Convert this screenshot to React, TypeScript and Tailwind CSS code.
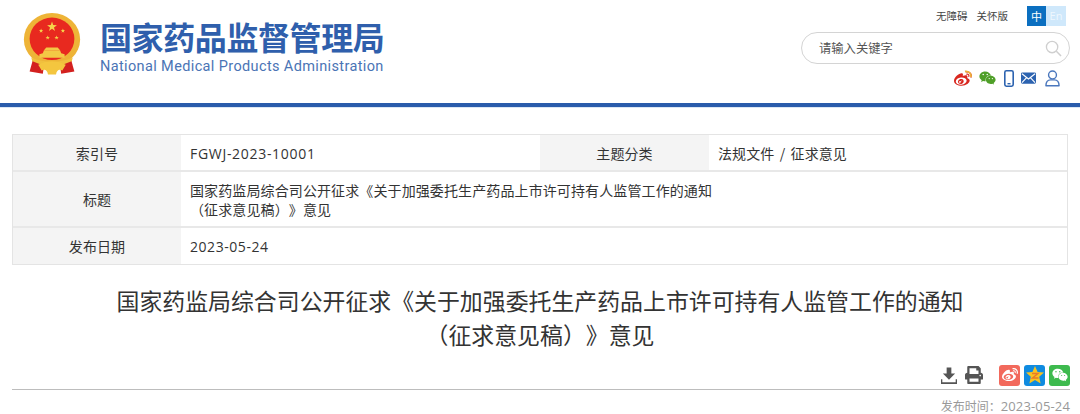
import React from "react";
import { FaWeibo, FaWeixin, FaPrint } from "react-icons/fa";

const CJK = "font-['Noto_Sans_CJK_SC','Open_Sans',sans-serif] [text-spacing-trim:space-all]";
const LATIN = "font-['Open_Sans','Noto_Sans_CJK_SC',sans-serif]";

function Emblem() {
  const stars = [
    [50, 24, 9],
    [31, 31, 4],
    [69, 31, 4],
    [42.5, 43, 4],
    [58, 43, 4],
  ];
  const starPath = (cx: number, cy: number, r: number) => {
    const p: string[] = [];
    for (let i = 0; i < 10; i++) {
      const a = -Math.PI / 2 + (i * Math.PI) / 5;
      const rr = i % 2 ? r * 0.4 : r;
      p.push(`${cx + rr * Math.cos(a)},${cy + rr * Math.sin(a)}`);
    }
    return p.join(" ");
  };
  return (
    <svg viewBox="0 0 100 108" className="w-[58px] h-[62px]">
      <ellipse cx="50" cy="46" rx="49" ry="46" fill="#eeb437" />
      <ellipse cx="50" cy="45" rx="39" ry="37" fill="#e8291f" />
      {stars.map(([x, y, r], i) => (
        <polygon key={i} points={starPath(x, y, r)} fill="#f6d44a" />
      ))}
      <path d="M28 78 L72 78 L72 72 L66 70 L64 65 L36 65 L34 70 L28 72 Z" fill="#f3c845" />
      <path d="M36 65 L64 65 L60 60 L40 60 Z" fill="#f3c845" />
      <path d="M14 78 Q50 92 86 78 L84 86 Q50 100 16 86 Z" fill="#f0c03e" />
      <path d="M16 84 L36 92 L34 106 L11 102 Z" fill="#d3201f" />
      <path d="M84 84 L64 92 L66 106 L89 102 Z" fill="#d3201f" />
      <path d="M26 90 Q50 78 74 90 L68 100 Q59 96 57 107 L43 107 Q41 96 32 100 Z" fill="#f4c63f" />
    </svg>
  );
}

function TopIcons() {
  return (
    <div className="flex items-center mt-[4px] h-[20px] mr-[10px]">
      <span className="relative block w-[18px] h-[18px] mr-[7px]">
        <FaWeibo className="text-[#d9271f] w-[18px] h-[18px] absolute top-[1px] left-0" />
        <svg viewBox="0 0 18 18" className="absolute inset-0 w-[18px] h-[18px]">
          <path d="M11 2.5 A5 5 0 0 1 17 8" fill="none" stroke="#edb13c" strokeWidth="1.8" />
        </svg>
      </span>
      <FaWeixin className="text-[#4f9f28] w-[17px] h-[16px] mr-[8px]" />
      <svg viewBox="0 0 10 17" className="w-[10px] h-[17px] mr-[7px]">
        <rect x="0.8" y="0.8" width="8.4" height="15.4" rx="1.6" fill="none" stroke="#2c63b0" strokeWidth="1.6" />
        <rect x="3.5" y="13" width="3" height="1.4" fill="#2c63b0" />
      </svg>
      <svg viewBox="0 0 16 12" className="w-[15px] h-[12px] mr-[9px]">
        <rect width="16" height="12" rx="1.5" fill="#2c63b0" />
        <path d="M1 1.5 L8 7 L15 1.5 M1 11 L6 5.5 M15 11 L10 5.5" fill="none" stroke="#fff" strokeWidth="1.2" />
      </svg>
      <svg viewBox="0 0 16 18" className="w-[15px] h-[17px]">
        <circle cx="8" cy="5.2" r="4.2" fill="none" stroke="#4a77bd" strokeWidth="1.5" />
        <path d="M1 16.8 Q1 10.5 6 10.5 L10 10.5 Q15 10.5 15 16.8 Z" fill="none" stroke="#4a77bd" strokeWidth="1.5" strokeLinejoin="round" />
      </svg>
    </div>
  );
}

function Header() {
  return (
    <header>
      <div className="h-[103px] flex justify-between pl-[23px] pr-[10px]">
        <div className="flex items-start pt-[13px]">
          <Emblem />
          <div className="ml-[19px] pt-[4px] w-[290px]">
            <div className={`${CJK} text-[32px] leading-[38px] font-bold tracking-[-0.4px] text-[#2f5fac] whitespace-nowrap`}>
              国家药品监督管理局
            </div>
            <div className="font-['Roboto',sans-serif] text-[14.5px] leading-[18px] mt-[3px] text-[#4a74b5] whitespace-nowrap tracking-[0.37px]">
              National Medical Products Administration
            </div>
          </div>
        </div>
        <div className="flex flex-col items-end pt-[6px]">
          <div className="flex items-center h-[20px] mr-[4px]">
            <span className={`${CJK} text-[10.5px] text-[#444] mr-[9px]`}>无障碍</span>
            <span className={`${CJK} text-[10.5px] text-[#444] mr-[19px]`}>关怀版</span>
            <span className={`${CJK} w-[19px] h-[20px] bg-[#0b6fc0] text-white text-[11px] flex items-center justify-center`}>中</span>
            <span className={`${LATIN} w-[20px] h-[20px] bg-[#cfe8fb] text-[#eef7fe] text-[11px] flex items-center justify-center`}>En</span>
          </div>
          <div className="mt-[6px] w-[269px] h-[32px] border border-[#d4d4d4] rounded-[16px] flex items-center justify-between pl-[17px] pr-[7px]">
            <span className={`${CJK} text-[12.3px] text-[#555]`}>请输入关键字</span>
            <svg viewBox="0 0 18 18" className="w-[17px] h-[17px]">
              <circle cx="7.5" cy="7.5" r="6" fill="none" stroke="#cfcfcf" strokeWidth="1.4" />
              <path d="M12 12 L17 17" stroke="#cfcfcf" strokeWidth="1.6" />
            </svg>
          </div>
          <TopIcons />
        </div>
      </div>
      <div className="h-[4px] bg-[#2a5cab]" />
      <div className="h-[1px] bg-[#dbe6f4]" />
    </header>
  );
}

const labelCell = `${CJK} bg-[#f4f4f4] flex items-center justify-center text-[14px] text-[#333] tracking-[0.1px]`;
const valueCell = `${CJK} flex items-center pl-[9px] text-[14px] text-[#333] tracking-[0.11px]`;
const latinValue = `flex items-center pl-[9px] text-[14px] text-[#333] ${LATIN}`;

function InfoTable() {
  return (
    <div className="mx-[12px] mt-[26px] border-t border-l border-r border-[#e4e4e4]">
      <div className="grid grid-cols-[168px_359px_169px_1fr] h-[37px] border-b-2 border-[#e8e8e8]">
        <div className={`${labelCell} pt-[1px]`}>索引号</div>
        <div className={`${latinValue} pt-[1px] tracking-[0.7px]`}>FGWJ-2023-10001</div>
        <div className={`${labelCell} pt-[1px]`}>主题分类</div>
        <div className={`${valueCell} pt-[1px] [word-spacing:2px]`}>法规文件 / 征求意见</div>
      </div>
      <div className="grid grid-cols-[168px_1fr] h-[56px] border-b-2 border-[#e8e8e8]">
        <div className={labelCell}>标题</div>
        <div className={`${valueCell} leading-[19px] pt-[1px]`}>
          <p className="w-[530px]">国家药监局综合司公开征求《关于加强委托生产药品上市许可持有人监管工作的通知（征求意见稿）》意见</p>
        </div>
      </div>
      <div className="grid grid-cols-[168px_1fr] h-[37px] border-b border-[#e4e4e4]">
        <div className={labelCell}>发布日期</div>
        <div className={`${latinValue} tracking-[0.55px]`}>2023-05-24</div>
      </div>
    </div>
  );
}

function ShareBar() {
  return (
    <div className="ml-[12px] mr-[10px] mt-[3px] h-[36px] border-b border-[#bdbdbd] flex items-center justify-end pt-[7px]">
      <svg viewBox="0 0 17 17" className="w-[16px] h-[17px] mr-[8px]">
        <path d="M6 0 H11 V6.5 H15 L8.5 13 L2 6.5 H6 Z" fill="#555" />
        <path d="M0.5 12.5 V16.5 H16.5 V12.5" fill="none" stroke="#555" strokeWidth="1.8" />
      </svg>
      <FaPrint className="w-[18px] h-[18px] text-[#555] mr-[16px]" />
      <span className="w-[21px] h-[21px] rounded-[3px] bg-[#f2695c] flex items-center justify-center mr-[4px]">
        <FaWeibo className="w-[16px] h-[16px] text-white" />
      </span>
      <span className="w-[21px] h-[21px] rounded-[3px] bg-[#0f8be0] flex items-center justify-center mr-[4px]">
        <svg viewBox="0 0 20 20" className="w-[20px] h-[20px]">
          <polygon points="10,1 12.6,7 19,7.6 14.2,11.8 15.6,18.4 10,15 4.4,18.4 5.8,11.8 1,7.6 7.4,7" fill="#f7c320" />
          <path d="M7 8.5 L13 8.5 L7.5 13 L13.5 13" fill="none" stroke="#e8792a" strokeWidth="1.4" />
        </svg>
      </span>
      <span className="w-[21px] h-[21px] rounded-[3px] bg-[#3dba4e] flex items-center justify-center">
        <FaWeixin className="w-[16px] h-[16px] text-white" />
      </span>
    </div>
  );
}

export default function App() {
  return (
    <div className="w-[1080px] h-[414px] overflow-hidden bg-white">
      <Header />
      <InfoTable />
      <h1 className={`${CJK} mt-[18px] mx-auto w-[860px] text-center text-[22.9px] leading-[34px] font-normal text-[#333]`}>
        国家药监局综合司公开征求《关于加强委托生产药品上市许可持有人监管工作的通知（征求意见稿）》意见
      </h1>
      <ShareBar />
      <div className={`${CJK} mr-[10px] mt-[9px] text-right text-[12px] leading-[14px] text-[#999]`}>
        发布时间：<span className={`${LATIN} text-[13px] tracking-[0.15px]`}>2023-05-24</span>
      </div>
    </div>
  );
}
